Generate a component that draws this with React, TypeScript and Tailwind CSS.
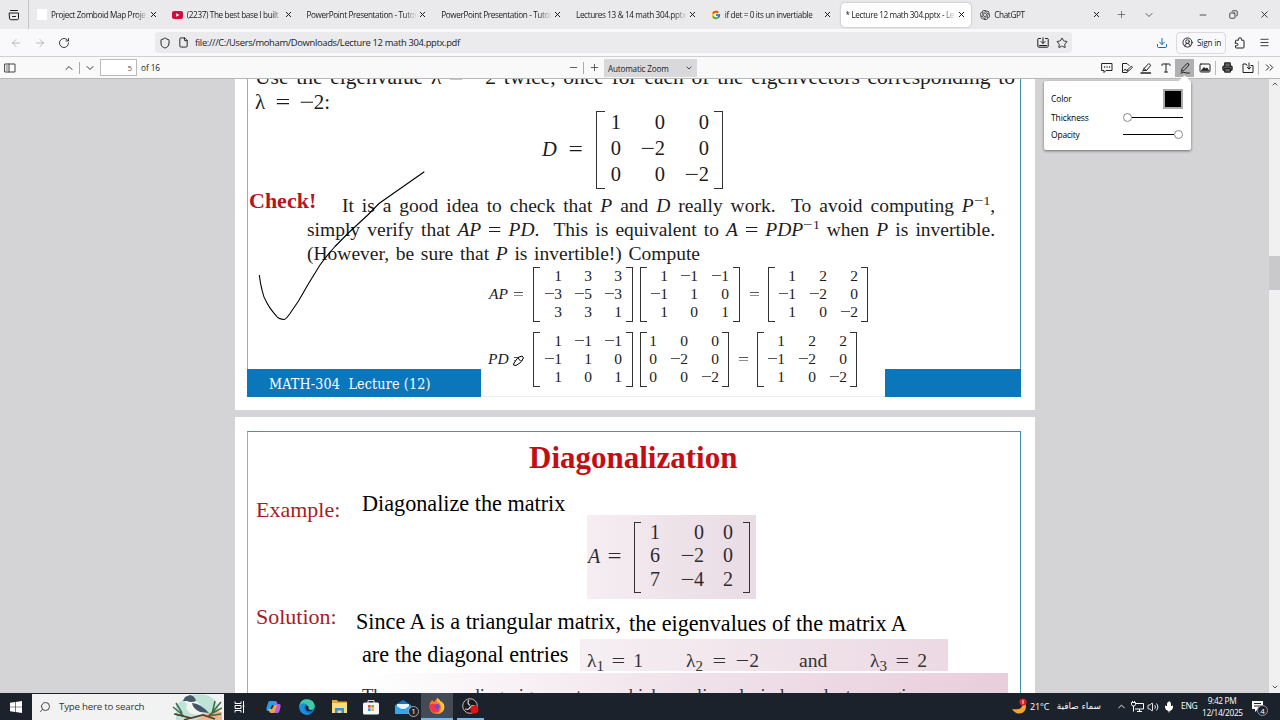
import type { ReactNode } from "react";
import {
  ArrowLeft, ArrowRight, RotateCw, Shield, File, Star, Download, CircleUserRound, Menu, X, Plus, Minus,
  ChevronDown, ChevronUp, Copy, MessageSquareMore, Type, Printer, ChevronsRight, Search, Volume2, Mic,
} from "lucide-react";
import { FcGoogle } from "react-icons/fc";
import { SiOpenai } from "react-icons/si";

const TABS = [
  { title: "Project Zomboid Map Proje", icon: "blank" },
  { title: "(2237) The best base I built", icon: "youtube" },
  { title: "PowerPoint Presentation - Tutor" },
  { title: "PowerPoint Presentation - Tutor" },
  { title: "Lectures 13 & 14 math 304.pptx" },
  { title: "if det = 0 its un invertiable", icon: "google" },
  { title: "* Lecture 12 math 304.pptx - Le", active: true },
  { title: "ChatGPT", icon: "openai" },
];

function Slot({ className, children }: { className: string; children?: ReactNode }) {
  return <div className={`flex shrink-0 items-center justify-center ${className}`}>{children}</div>;
}

function Glyph({ size = 12, children }: { size?: number; children: ReactNode }) {
  return (
    <svg width={size} height={size} viewBox="0 0 12 12" fill="none" stroke="currentColor" strokeLinejoin="round" strokeLinecap="round">
      {children}
    </svg>
  );
}

function TabIcon({ name }: { name: string }) {
  if (name === "blank") return <div className="h-[11px] w-[10px] shrink-0 bg-white" />;
  if (name === "google") return <FcGoogle size={10} className="shrink-0" />;
  if (name === "openai") return <SiOpenai size={10} className="shrink-0 text-[#222]" />;
  return (
    <svg width="11" height="8" viewBox="0 0 11 8" className="shrink-0">
      <rect width="11" height="8" rx="2" fill="#d40b3c" />
      <path d="M4.2 2.2v3.6L7.4 4z" fill="#fff" />
    </svg>
  );
}

function TabStrip() {
  return (
    <div className="flex h-[29px] items-center bg-[#eaeaec]">
      <Slot className="w-[28px]">
        <Glyph>
          <path d="M2.500 1.500h7M1.500 4h9v5.500q0 1.200-1.200 1.200H2.700q-1.200 0-1.200-1.200zM4.500 7.500h3" />
        </Glyph>
      </Slot>
      <div className="h-[29px] w-px bg-[#c5c5c9]" />
      <div className="flex w-[1079px] pl-px">
        {TABS.map((tab, i) => (
          <div key={i} className="h-[24px] w-[134.75px] shrink-0 px-[2px]">
            <div
              className={`flex h-full items-center rounded pr-[5px] pl-[5px] ${
                tab.active ? "bg-white shadow-[0_0_2px_rgba(0,0,0,0.35)]" : ""
              }`}
            >
              {tab.icon && <TabIcon name={tab.icon} />}
              <span
                className={`min-w-0 flex-1 overflow-hidden text-[8.200px] leading-[14px] tracking-[-0.380px] whitespace-nowrap [mask-image:linear-gradient(to_right,black_88%,transparent)] ${
                  tab.icon ? "ml-[4px]" : ""
                }`}
              >
                {tab.title}
              </span>
              <X size={9} strokeWidth={2.6} className="ml-[1px] shrink-0" />
            </div>
          </div>
        ))}
      </div>
      <Slot className="w-[27px]"><Plus size={11} strokeWidth={1.6} className="text-[#555]" /></Slot>
      <Slot className="w-[27px]"><ChevronDown size={12} strokeWidth={1.7} className="text-[#444]" /></Slot>
      <div className="flex-1" />
      <Slot className="w-[31px]"><Minus size={10} strokeWidth={1.8} /></Slot>
      <Slot className="w-[31px]"><Copy size={9} strokeWidth={2} className="-scale-x-100" /></Slot>
      <Slot className="w-[31px]"><X size={11} strokeWidth={1.8} /></Slot>
    </div>
  );
}

function NavBar() {
  return (
    <div className="flex h-[28px] items-center border-b border-[#cfcfd3] bg-[#f9f9fb]">
      <Slot className="ml-1 w-[24px]"><ArrowLeft size={12} strokeWidth={1.6} className="text-[#aaa]" /></Slot>
      <Slot className="w-[24px]"><ArrowRight size={12} strokeWidth={1.6} className="text-[#aaa]" /></Slot>
      <Slot className="w-[24px]"><RotateCw size={12} strokeWidth={1.9} className="text-[#333]" /></Slot>
      <div className="ml-[79px] flex h-[21px] w-[917px] items-center rounded bg-[#ebebed]">
        <Slot className="w-[19px]"><Shield size={12} strokeWidth={1.9} /></Slot>
        <Slot className="w-[19px]"><File size={11} strokeWidth={2} /></Slot>
        <span className="mt-[2px] ml-[2px] text-[9.400px] tracking-[-0.330px]">
          file:///C:/Users/moham/Downloads/Lecture 12 math 304.pptx.pdf
        </span>
        <div className="flex-1" />
        <Slot className="w-[19px]">
          <Glyph>
            <path d="M3.500 1.500h-2q-.7 0-.7.700v7q0 1 1 1h8.400q1 0 1-1v-7q0-.7-.7-.7h-2M6 .8v5.500M4 4.500l2 2 2-2M2.500 8.500h7" />
          </Glyph>
        </Slot>
        <Slot className="mr-[1px] w-[19px]"><Star size={12} strokeWidth={1.8} /></Slot>
      </div>
      <Slot className="ml-[80px] w-[20px]"><Download size={12} strokeWidth={2} className="text-[#1668b3]" /></Slot>
      <div className="ml-[4px] flex h-[22px] w-[50px] items-center rounded border border-[#dadade] pl-[5px]">
        <CircleUserRound size={11} strokeWidth={2} />
        <span className="mt-px ml-[4px] text-[8.300px] tracking-[-0.200px] whitespace-nowrap">Sign in</span>
      </div>
      <Slot className="ml-[4px] w-[20px]">
        <Glyph>
          <path d="M1.500 4.500V4q0-.8.800-.8h2.200V2.300q0-1.500 1.500-1.500t1.500 1.500v.9h1.700q.8 0 .8.800v6.200q0 .8-.8.800H2.300q-.8 0-.8-.8V8.700h1.200q1.300 0 1.300-1.200T2.700 6.300H1.500z" />
        </Glyph>
      </Slot>
      <Slot className="ml-[4px] w-[20px]"><Menu size={11} strokeWidth={1.8} /></Slot>
    </div>
  );
}

function PdfToolbar() {
  return (
    <div className="flex h-[22px] items-center border-b border-[#b8b8b8] bg-[#f9f9fa] text-[#222]">
      <Slot className="w-[20px] text-[#444]">
        <Glyph>
          <path d="M1 2h10v8H1zM5 2v8M2.700 4h.6M2.700 6h.6M2.700 8h.6" />
        </Glyph>
      </Slot>
      <Slot className="ml-[38px] w-[21px]"><ChevronUp size={12} strokeWidth={1.8} /></Slot>
      <div className="h-[12px] w-px bg-[#aaa]" />
      <Slot className="w-[20px]"><ChevronDown size={12} strokeWidth={1.8} /></Slot>
      <div className="flex h-[17px] w-[37px] items-center justify-end border border-[#bbb] bg-white pr-[4px] text-[8px] text-[#555]">5</div>
      <span className="mt-px ml-[4px] w-[20px] text-[8.300px] tracking-[-0.1px] whitespace-nowrap">of 16</span>
      <Slot className="ml-[402px] w-[20px]"><Minus size={11} strokeWidth={1.8} className="text-[#444]" /></Slot>
      <div className="h-[12px] w-px bg-[#aaa]" />
      <Slot className="w-[20px]"><Plus size={11} strokeWidth={1.8} className="text-[#444]" /></Slot>
      <div className="flex h-[18px] w-[93px] items-center justify-between bg-[#d9d9db] pr-[4px] pl-[4px]">
        <span className="mt-px text-[8.200px] leading-[9px] tracking-[-0.200px]">Automatic Zoom</span>
        <ChevronDown size={8} strokeWidth={2.4} />
      </div>
      <div className="flex-1" />
      <Slot className="w-[20px]">
        <Glyph>
          <path d="M1 1.500h10v7H5L3 10.500v-2H1z" />
          <path d="M3.500 5h.1M6 5h.1M8.500 5h.1" strokeWidth="1.300" />
        </Glyph>
      </Slot>
      <Slot className="w-[19px]">
        <Glyph>
          <path d="M6 10.500H1.500v-9h4.500L8 3.500M3 8.500l1.200-1.500 1 1.500 1.300-.5M6.500 8l3.700-3.800 1.300 1L8 8.800l-1.600.400z" />
        </Glyph>
      </Slot>
      <Slot className="w-[20px]">
        <Glyph>
          <path d="M4 6.500L8.800 1.500l2 1.800L6.500 8.500H4zM4 6.500l2.500 2M4 8.500L2.500 9" />
          <path d="M1 11h9.500" strokeWidth="1.400" />
        </Glyph>
      </Slot>
      <Slot className="w-[19px]"><Type size={12} strokeWidth={2} /></Slot>
      <Slot className="h-[18px] w-[19px] bg-[#b0b0b3]">
        <Glyph>
          <path d="M2.500 9L3.300 6.300 8 1.500q1.800-.3 2 1.500L5.200 8.200zM2 11q3-1.500 5 0h3.500" />
        </Glyph>
      </Slot>
      <Slot className="w-[21px]">
        <Glyph>
          <rect x="1" y="2" width="10" height="8" rx="1" />
          <path d="M2.500 8.500L5 5.500l1.500 1.500L8 6l1.500 2.500z" fill="currentColor" />
        </Glyph>
      </Slot>
      <div className="h-[14px] w-px bg-[#bbb]" />
      <Slot className="w-[22px]"><Printer size={11} strokeWidth={2.800} className="fill-[#666]" /></Slot>
      <Slot className="w-[20px]">
        <Glyph>
          <path d="M5 3.500L4 2H1v8.500h10v-7H9M7 1v6M5.200 5.200L7 7l1.800-1.800" />
        </Glyph>
      </Slot>
      <div className="h-[14px] w-px bg-[#bbb]" />
      <Slot className="w-[21px]"><ChevronsRight size={13} strokeWidth={1.8} /></Slot>
    </div>
  );
}

function M({ children }: { children: ReactNode }) {
  return <i>{children}</i>;
}

// math operators are set wider than the text font draws them
function Op({ children }: { children: string }) {
  return <span className="mx-[1px] inline-block scale-x-125">{children}</span>;
}

function Inverse() {
  return (
    <span className="relative -top-[7px] text-[13.500px] leading-[0]">
      <Op>−</Op>1
    </span>
  );
}

function Line({ className, children }: { className: string; children: ReactNode }) {
  return <div className={`whitespace-nowrap [text-align-last:justify] ${className}`}>{children}</div>;
}

interface MatrixProps {
  rows: string[];
  cols: string[];
  bracket: string;
  rowHeight: string;
  gap: string;
  lift: string;
}

function Matrix({ rows, cols, bracket, rowHeight, gap, lift }: MatrixProps) {
  return (
    <div className="flex items-center">
      <div className={`border-y border-l border-[#333] ${bracket}`} />
      <div className={lift}>
        {rows.map((row, i) => (
          <div key={i} className={`flex ${rowHeight}`}>
            {row.split(" ").map((cell, j) => (
              <div key={j} className={`flex justify-end ${cols[j]}`}>
                {cell.startsWith("−") && <Op>−</Op>}
                {cell.replace("−", "")}
              </div>
            ))}
          </div>
        ))}
      </div>
      <div className={`border-y border-r border-[#333] ${gap} ${bracket}`} />
    </div>
  );
}

const SMALL = { bracket: "h-[55px] w-[7px]", rowHeight: "h-[18px] leading-[18px]", lift: "-mt-[2px]" };

function SlideOne() {
  return (
    <div className="flex h-[331px] overflow-hidden bg-white px-[12px]">
      <div className="flex h-[318px] w-[774px] flex-col border-r border-b border-l border-r-[#3f93a8] border-b-[#eee] border-l-[#8db4c0] text-[19.500px] text-[#1c1c1c]">
        <Line className="-mt-[15px] ml-[7px] h-[25px] w-[760px] shrink-0 text-[21.500px] leading-[26px]">
          Use the eigenvalue λ <Op>=</Op> <Op>−</Op>2 twice, once for each of the eigenvectors corresponding to
        </Line>
        <Line className="ml-[7px] h-[21px] w-[75px] shrink-0 text-[21px] leading-[27px]">λ <Op>=</Op> <Op>−</Op>2:</Line>
        <div className="ml-[294px] flex h-[79px] shrink-0 items-center text-[20.500px]">
          <Line className="mr-[13px] w-[41px]"><M>D</M> <Op>=</Op></Line>
          <Matrix
            rows={["1 0 0", "0 −2 0", "0 0 −2"]}
            cols={["w-[16px]", "w-[44px]", "w-[44px]"]}
            bracket="h-[78px] w-[9px]"
            rowHeight="h-[26px] leading-[25px]"
            gap="ml-[5px]"
            lift="-mt-[1px]"
          />
        </div>
        <div className="mt-[5px] flex h-[72px] shrink-0">
          <div className="ml-[1px] w-[58px] shrink-0 text-[22px] leading-[14px] font-bold text-[#b8141c]">Check!</div>
          <div className="leading-[23.700px]">
            <Line className="ml-[35px] h-[23.700px] w-[653px]">
              It is a good idea to check that <M>P</M> and <M>D</M> really work.&nbsp; To avoid computing{" "}
              <M>P</M><Inverse />,
            </Line>
            <Line className="h-[24.200px] w-[688px]">
              simply verify that <M>AP</M> <Op>=</Op> <M>PD</M>.&nbsp; This is equivalent to <M>A</M> <Op>=</Op> <M>PDP</M>
              <Inverse /> when <M>P</M> is invertible.
            </Line>
            <Line className="w-[393px]">(However, be sure that <M>P</M> is invertible!) Compute</Line>
          </div>
        </div>
        <div className="ml-[241px] flex h-[57px] shrink-0 items-center text-[15.500px]">
          <Line className="-mt-[2px] mr-[9px] w-[35px]"><M>AP</M> <Op>=</Op></Line>
          <Matrix rows={["1 3 3", "−3 −5 −3", "3 3 1"]} cols={["w-[22px]", "w-[30px]", "w-[30px]"]} gap="ml-[4px]" {...SMALL} />
          <div className="w-[7px]" />
          <Matrix rows={["1 −1 −1", "−1 1 0", "1 0 1"]} cols={["w-[21px]", "w-[30px]", "w-[31px]"]} gap="ml-[4px]" {...SMALL} />
          <div className="-mt-[2px] w-[28px] text-center"><Op>=</Op></div>
          <Matrix rows={["1 2 2", "−1 −2 0", "1 0 −2"]} cols={["w-[21px]", "w-[31px]", "w-[31px]"]} gap="ml-[3px]" {...SMALL} />
        </div>
        <div className="mt-[8px] ml-[240px] flex h-[57px] shrink-0 items-center text-[15.500px]">
          <Line className="-mt-[2px] mr-[9px] w-[36px]"><M>PD</M> <Op>=</Op></Line>
          <Matrix rows={["1 −1 −1", "−1 1 0", "1 0 1"]} cols={["w-[22px]", "w-[30px]", "w-[30px]"]} gap="ml-[4px]" {...SMALL} />
          <div className="w-[7px]" />
          <Matrix rows={["1 0 0", "0 −2 0", "0 0 −2"]} cols={["w-[10px]", "w-[31px]", "w-[31px]"]} gap="ml-[3px]" {...SMALL} />
          <div className="-mt-[2px] w-[28px] text-center"><Op>=</Op></div>
          <Matrix rows={["1 2 2", "−1 −2 0", "1 0 −2"]} cols={["w-[21px]", "w-[31px]", "w-[31px]"]} gap="ml-[3px]" {...SMALL} />
        </div>
        <div className="-mx-px -mt-[19px] flex h-[28px] shrink-0 justify-between">
          <div className="flex w-[234px] items-center bg-[#0b77ba] pl-[22px] text-white">
            <div className="pt-[3px] font-['DejaVu_Serif_Condensed','DejaVu_Serif',serif] text-[14.200px] tracking-[0.150px] whitespace-pre">
              {"MATH-304  Lecture (12)"}
            </div>
          </div>
          <div className="w-[136px] bg-[#0b77ba]" />
        </div>
      </div>
    </div>
  );
}

function Lambda({ n, value, className }: { n: number; value: ReactNode; className: string }) {
  return (
    <Line className={className}>
      λ<span className="relative top-[4px] text-[15px] leading-[0]">{n}</span> <Op>=</Op> {value}
    </Line>
  );
}

function SlideTwo() {
  return (
    <div className="mt-[7px] h-[276px] overflow-hidden bg-white px-[12px] pt-[14px] text-[22.200px] text-black">
      <div className="flex h-[300px] w-[774px] flex-col border border-t-[#4a8fa8] border-r-[#3f93a8] border-l-[#8db4c0]">
        <div className="mt-[8px] ml-[281px] h-[36px] text-[31px] leading-[36px] font-bold text-[#c40d14]">Diagonalization</div>
        <div className="flex h-[39px]">
          <div className="ml-[8px] w-[106px] pt-[22px] text-[22px] leading-[24px] text-[#a81b26]">Example:</div>
          <div className="pt-[16px] leading-[24px]">Diagonalize the matrix</div>
        </div>
        <div className="ml-[339px] flex h-[84px] w-[169px] items-center bg-linear-to-r from-[#f6eef2] via-[#efe3ea] to-[#e9dce5] text-[20px] text-[#2c2a2e]">
          <Line className="-mt-[2px] mr-[13px] ml-[1px] w-[33px]"><M>A</M> <Op>=</Op></Line>
          <Matrix
            rows={["1 0 0", "6 −2 0", "7 −4 2"]}
            cols={["w-[19px]", "w-[44px]", "w-[29px]"]}
            bracket="h-[71px] w-[7px]"
            rowHeight="h-[23.600px] leading-[23px]"
            gap="ml-[10px]"
            lift="-mt-[2px]"
          />
        </div>
        <div className="flex h-[40px]">
          <div className="ml-[8px] w-[100px] pt-[6px] text-[22px] leading-[24px] text-[#a81b26]">Solution:</div>
          <Line className="w-[264px] pt-[11px] leading-[24px]">Since A is a triangular matrix,</Line>
          <Line className="ml-[9px] w-[277px] pt-[13px] leading-[24px]">the eigenvalues of the matrix A</Line>
        </div>
        <div className="ml-[114px] flex h-[34px]">
          <Line className="w-[206px] pt-[4px] leading-[24px]">are the diagonal entries</Line>
          <div className="ml-[12px] flex h-[32px] w-[368px] bg-linear-to-r from-[#f5eff3] to-[#ecd9e3] pt-[10px] text-[19.600px] leading-[24px] text-[#333]">
            <Lambda n={1} value="1" className="ml-[7px] w-[56px]" />
            <Lambda n={2} value={<><Op>−</Op>2</>} className="ml-[43px] w-[73px]" />
            <span className="ml-[40px] w-[30px]">and</span>
            <Lambda n={3} value="2" className="ml-[41px] w-[57px]" />
          </div>
        </div>
        <div className="ml-[114px] h-[30px] w-[646px] bg-linear-to-r from-white via-[#f0e2ea] to-[#e8cedb] pt-[11px] text-[19.600px] leading-[24px] text-[#333]">
          <Line className="w-[636px] text-[18.500px]">The corresponding eigenvectors, which are linearly independent, are given, respec-</Line>
        </div>
      </div>
    </div>
  );
}

function InkPopup() {
  return (
    <div className="absolute top-[24px] left-[1044px] flex h-[69px] w-[147px] flex-col rounded-[2px] bg-white pr-[8px] pl-[7px] text-[8.500px] text-black shadow-[0_1px_3px_rgba(0,0,0,0.5)]">
      <div className="absolute -top-[4px] right-[2px] h-[9px] w-[9px] rotate-45 bg-white" />
      <div className="mt-[7px] flex h-[21px] items-center justify-between">
        <span className="mt-[2px] tracking-[-0.100px]">Color</span>
        <div className="h-[20px] w-[20px] border-2 border-[#aaa] bg-black" />
      </div>
      <div className="flex h-[17px] items-center justify-between">
        <span className="mt-[2px] tracking-[-0.100px]">Thickness</span>
        <div className="flex w-[60px] items-center">
          <div className="h-[9px] w-[9px] rounded-full border border-[#888] bg-white" />
          <div className="h-px flex-1 bg-black" />
        </div>
      </div>
      <div className="flex h-[17px] items-center justify-between">
        <span className="mt-[2px] tracking-[-0.200px]">Opacity</span>
        <div className="flex w-[60px] items-center">
          <div className="h-px flex-1 bg-black" />
          <div className="h-[9px] w-[9px] rounded-full border border-[#888] bg-white" />
        </div>
      </div>
    </div>
  );
}

function Viewer() {
  return (
    <div className="relative flex h-[614px] overflow-hidden bg-[#d4d4d6] pl-[235px]">
      <div className="w-[800px] shrink-0 font-['Liberation_Serif',serif]">
        <SlideOne />
        <SlideTwo />
      </div>
      <div className="ml-auto flex w-[11px] flex-col items-center bg-[#f0f0f1]">
        <ChevronUp size={8} strokeWidth={3} className="mt-[1px] text-[#555]" />
        <div className="mt-[168px] h-[34px] w-full bg-[#c9c9cb]" />
        <ChevronDown size={8} strokeWidth={3} className="mt-auto mb-[2px] text-[#555]" />
      </div>
      {/* ink stroke drawn over the page, plus the pencil cursor */}
      <svg className="absolute top-0 left-[235px]" width="800" height="331" viewBox="235 79 800 331" fill="none" stroke="#000">
        <path
          d="M259.300 275C260 281 261 286 262 290C263 295 265 300 267 303C270 309 273 312 276.700 316.500C279 319 281 319.500 284 319.500C286 319.500 288 316 290 313.500L298.500 301L308.300 284L320 265C325 258 330 252 335 246.500L348.300 233L368.300 214.500L379 203.500L424.300 171.700"
          strokeWidth="1.100"
        />
        <path d="M514 363l4-5.500 4-1.500 1.500 2-3 4.500-4.500 3-2.500-.5zM518 358l2.500 3" strokeWidth="1" fill="#fff" />
      </svg>
    </div>
  );
}

function BirdArt() {
  return (
    <svg width="50" height="26" viewBox="0 0 50 26">
      <path d="M4 12Q16-3 34 1Q48 4 47 26H4z" fill="#bfe3d6" />
      <path d="M28 24Q38 15 50 18v8H24z" fill="#f5b48d" />
      <path d="M1 13l10 8M2 20l10 2M4 9l6 10M49 8l-10 12M50 14l-13 7M43 7l-3 13M49 20l-13 2" stroke="#3c6b43" strokeWidth="1.500" />
      <path d="M3 20l16 4 12-3 12 4M18 24l-6 2" stroke="#5b3b2c" strokeWidth="1.800" fill="none" />
      <path d="M12 7Q14 2 20 4Q26 8 36 18l-5 1Q25 22 18 19Q13 15 15 10z" fill="#f4f4ef" />
      <path d="M11 7l2-4 5-2q5 1 6 6-5 2-9 0z" fill="#46586a" />
      <path d="M20 9q8 0 17 10l-9-1q-7-3-8-9z" fill="#3e556b" />
    </svg>
  );
}

function Taskbar() {
  return (
    <div className="flex h-[27px] items-center bg-[#1b222c] text-white">
      <Slot className="w-[32px]">
        <svg width="12" height="12" viewBox="0 0 12 12" fill="#fff">
          <path d="M0 1.700l5-.7v4.700H0zM5.600.9L12 0v5.700H5.600zM0 6.300h5V11l-5-.7zM5.600 6.300H12V12l-6.400-.9z" />
        </svg>
      </Slot>
      <div className="flex h-[26px] w-[192px] items-center bg-[#f2f2f2] pl-[7px] text-[#333]">
        <Search size={12} strokeWidth={1.800} className="-scale-x-100" />
        <span className="mt-px ml-[8px] w-[113px] text-[9.700px] tracking-[-0.200px] whitespace-nowrap">Type here to search</span>
        <BirdArt />
      </div>
      <Slot className="w-[32px]">
        <svg width="12" height="12" viewBox="0 0 12 12" fill="none" stroke="#fff">
          <path d="M1 .5v2h6v-2M1 11.500v-2h6v2M1 4.500h6v3H1zM9.500 0v12M8.500 5h2" />
        </svg>
      </Slot>
      <Slot className="w-[34px]">
        <svg width="15" height="14" viewBox="0 0 15 14">
          <path d="M4 1h5l2 4H6L4 11H2Q0 11 .5 8L2 3Q2.500 1 4 1z" fill="#2b9fe0" />
          <path d="M9 1q2 0 2.500 3h1.500q2 0 1.500 3l-1 4q-.5 2-2 2H7L9 7z" fill="#b95ce0" />
          <path d="M2 9h4l2-4h3L9 11q-.5 2-2 2H5q-1.500 0-2-2z" fill="#f4a340" />
        </svg>
      </Slot>
      <Slot className="w-[33px]">
        <svg width="16" height="16" viewBox="0 0 16 16">
          <circle cx="8" cy="8" r="7.800" fill="#1373c4" />
          <path d="M.5 6Q2 0 8 .2Q15 .5 15.800 7Q15.500 11 11 11Q8.500 10.500 9.500 8.500Q9 5 5 5Q2 5 .5 8z" fill="#3fc9a5" />
          <path d="M.4 7Q3 3 7 5Q4.500 7 5.500 10.500Q7 14.500 12 14.500Q6 17.500 2 13Q0 10 .4 7z" fill="#1a8fdd" />
          <path d="M7.500 6.500Q9.700 6.500 9.500 9Q9 11.500 14 10.800Q12 13 8.500 12Q5.500 9.500 7.500 6.500z" fill="#1b222c" />
        </svg>
      </Slot>
      <Slot className="w-[32px]">
        <svg width="15" height="13" viewBox="0 0 15 13">
          <path d="M0 0h5l1 1.500h9V13H0z" fill="#e5a92e" />
          <path d="M0 3h15v10H0z" fill="#fbdc7a" />
          <path d="M3 13V8h9v5h-2.500v-2.500h-4V13z" fill="#3a8fcf" />
        </svg>
      </Slot>
      <Slot className="w-[32px]">
        <svg width="16" height="16" viewBox="0 0 16 16">
          <path d="M5 4V1.500h6V4" stroke="#ddd" fill="none" />
          <rect y="3.500" width="16" height="12" rx="1.500" fill="#f5f5f5" />
          <path d="M5 6h2.700v2.700H5z" fill="#e8502b" />
          <path d="M8.300 6H11v2.700H8.300z" fill="#7db72f" />
          <path d="M5 9.300h2.700V12H5z" fill="#2f9fe4" />
          <path d="M8.300 9.300H11V12H8.300z" fill="#f5b91e" />
        </svg>
      </Slot>
      <Slot className="relative mr-[2px] w-[32px]">
        <svg width="16" height="14" viewBox="0 0 16 14">
          <path d="M0 5l8-5 8 5v9H0z" fill="#1477c6" />
          <path d="M2 4h12v5H2z" fill="#eaf5fc" />
          <path d="M0 5l8 5 8-5v9H0z" fill="#35a7e8" />
        </svg>
        <div className="absolute top-[6px] right-0 flex h-[11px] w-[11px] items-center justify-center rounded-full border border-[#aaa] bg-[#1b222c] text-[8px]">1</div>
      </Slot>
      <Slot className="h-[27px] w-[32px] border-b-2 border-[#76b9ed] bg-[#444b55]">
        <svg width="16" height="16" viewBox="0 0 16 16">
          <path d="M1 5l2-3 2 2q2-2 3-4 2 1 3 3 2 0 2.500 1.500Q16 7 15.500 10 14 16 8 16 1 15.500.5 9z" fill="#ff7a26" />
          <path d="M8 0q3 1.500 4 4 4 1 3 7-2 4-6 4 4-3 3-7Q11 4 8 4z" fill="#ffca3a" />
          <path d="M.5 8Q2 5 5 6l3 1-2 2q0 3 5 2-2 5-7 3Q.5 12 .5 8z" fill="#f5334f" />
          <circle cx="8.300" cy="8.500" r="2.600" fill="#7a46d0" />
        </svg>
      </Slot>
      <Slot className="ml-[4px] h-[27px] w-[27px] border-b-2 border-[#76b9ed]">
        <svg width="17" height="16" viewBox="0 0 17 16">
          <circle cx="8" cy="8" r="7.300" fill="#1a1a1c" stroke="#bbb" />
          <path d="M7 2q-2.500 3 1 5.500M13 8q-4-1.500-5 2M3 11q4 1.500 5-2" stroke="#ccc" fill="none" strokeWidth="1.300" />
          <circle cx="12.500" cy="11.500" r="4" fill="#e41212" />
        </svg>
      </Slot>
      <div className="flex-1" />
      <Slot className="w-[18px]">
        <svg width="17" height="17" viewBox="0 0 17 17">
          <path d="M11 2q3 11-10 9 3 5 8 4.500 6-1 6-7Q14.500 4 11 2z" fill="#f5a032" />
          <circle cx="12" cy="4" r="3.600" fill="#d81f26" />
          <path d="M12 2.200v3.600" stroke="#fff" />
        </svg>
      </Slot>
      <span className="ml-[2px] w-[26px] text-[9px] tracking-[-0.1px]">21°C</span>
      <span dir="rtl" className="w-[45px] font-['DejaVu_Sans',sans-serif] text-[8.900px] whitespace-nowrap">سماء صافية</span>
      <Slot className="ml-[12px] w-[16px]"><ChevronUp size={11} strokeWidth={2} /></Slot>
      <Slot className="w-[16px]">
        <svg width="13" height="11" viewBox="0 0 13 11" fill="none" stroke="#fff">
          <path d="M5 2.500h7.500v5.500H4M6 10.500h5M8.500 8v2M2.500 5v5.500M.5 1.500h4v2q0 1.500-2 1.500t-2-1.500zM1.500 0v1.500M3.500 0v1.500" />
        </svg>
      </Slot>
      <Slot className="w-[16px]"><Volume2 size={12} strokeWidth={1.800} /></Slot>
      <Slot className="w-[16px]"><Mic size={12} strokeWidth={2} fill="#fff" /></Slot>
      <span className="ml-[4px] w-[21px] text-[8.500px] tracking-[-0.3px]">ENG</span>
      <div className="w-[40px] text-center text-[8.300px] leading-[12px] tracking-[-0.330px] whitespace-nowrap">
        9:42 PM
        <br />
        12/14/2025
      </div>
      <div className="relative mr-[16px] ml-[10px] w-[12px]">
        <svg width="11" height="11" viewBox="0 0 11 11" fill="#fff">
          <path d="M0 0h11v8H6L3 11V8H0z" />
          <path d="M2 2.500h7M2 5h7" stroke="#1b222c" />
        </svg>
        <div className="absolute top-[4px] left-[5px] flex h-[11px] w-[11px] items-center justify-center rounded-full border border-[#999] bg-[#1b222c] text-[8px]">4</div>
      </div>
    </div>
  );
}

export default function App() {
  return (
    <div className="h-[720px] w-[1280px] overflow-hidden font-['Open_Sans','Noto_Sans',sans-serif] text-[#1a1a1e]">
      <TabStrip />
      <NavBar />
      <div className="relative">
        <PdfToolbar />
        <Viewer />
        <InkPopup />
      </div>
      <Taskbar />
    </div>
  );
}
